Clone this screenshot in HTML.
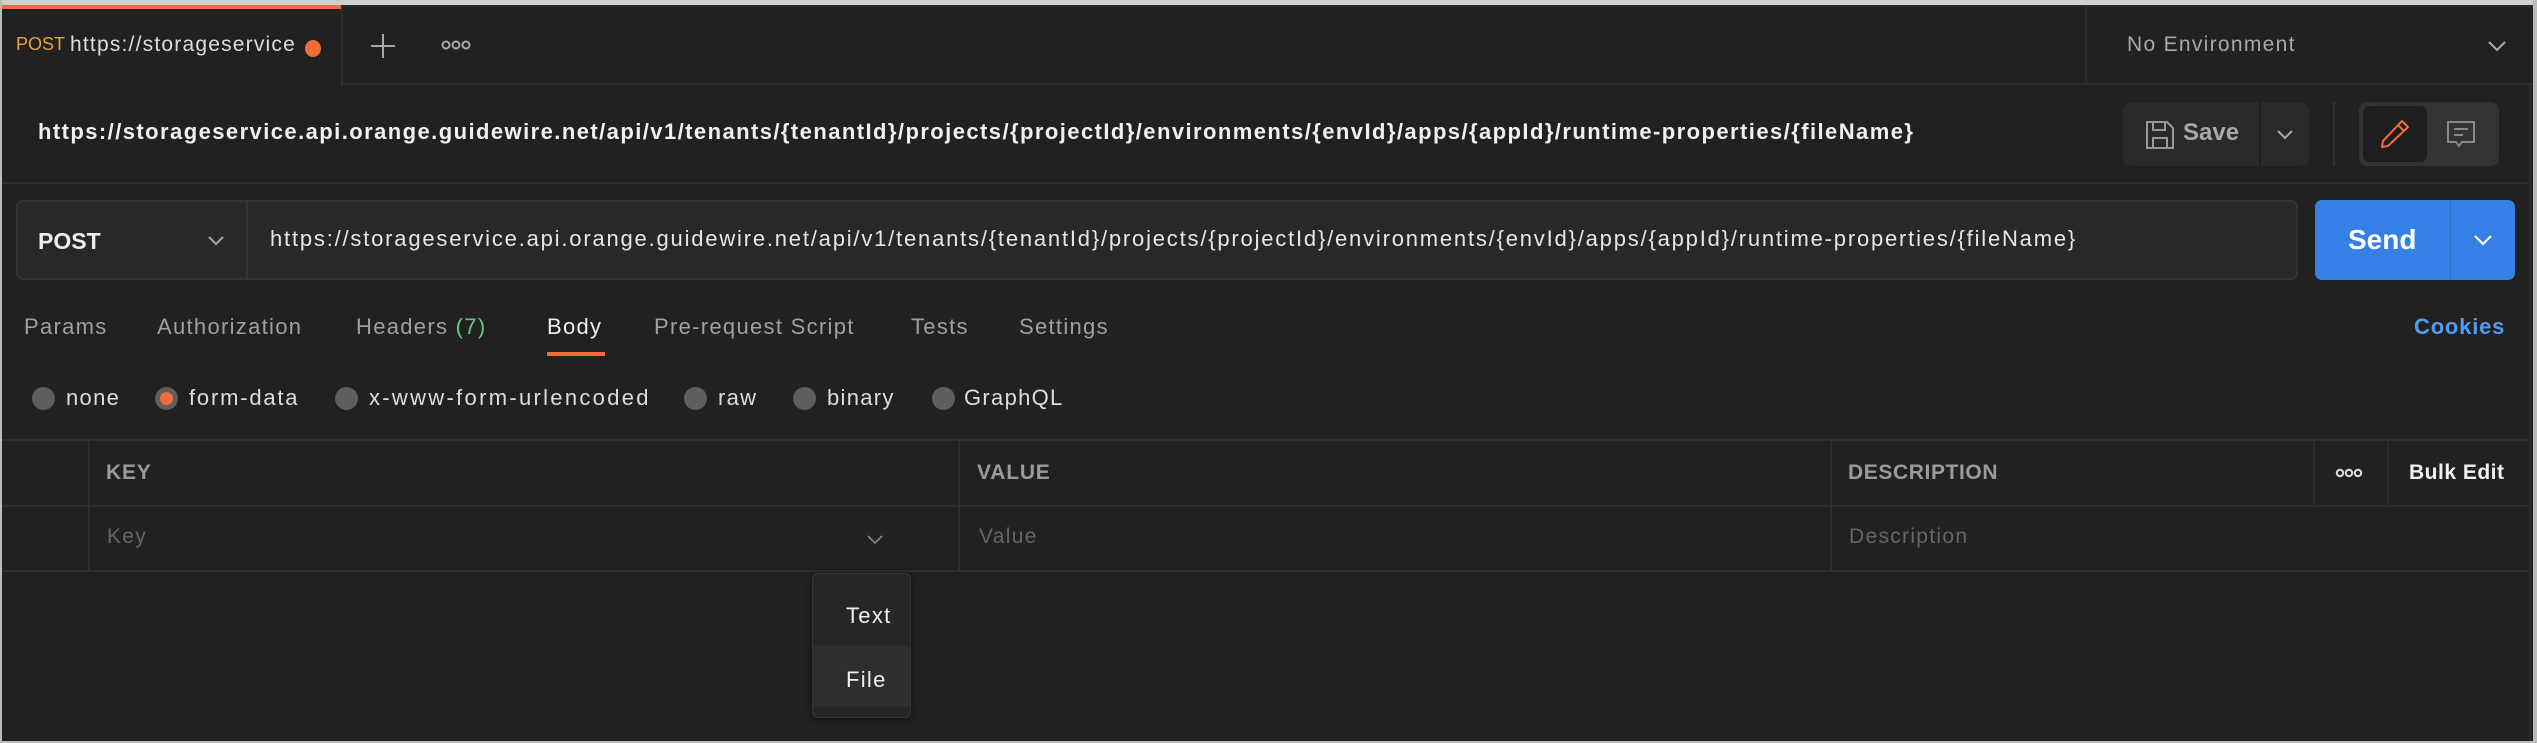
<!DOCTYPE html>
<html><head><meta charset="utf-8"><style>
*{margin:0;padding:0;box-sizing:border-box}
body{width:2537px;height:743px;background:#212121;font-family:"Liberation Sans",sans-serif;color:#cfcfcf;position:relative;overflow:hidden}
.a{position:absolute;white-space:nowrap}
.t{letter-spacing:1.3px}
.hl{position:absolute;height:2px;background:#2e2e2e}
.vl{position:absolute;width:2px;background:#2e2e2e}
svg{position:absolute}
</style></head><body>
<div class="a" style="left:0;top:0;width:2537px;height:5px;background:#cfcfcf"></div>
<div class="a" style="left:0;top:0;width:2px;height:743px;background:#bbb"></div>
<div class="a" style="left:0;top:741px;width:2537px;height:2px;background:#bbb"></div>
<div class="a" style="left:2533px;top:0;width:4px;height:743px;background:#bbb"></div>
<!-- tab row -->
<div class="a" style="left:2px;top:5px;width:339px;height:4px;background:#f26b3a"></div>
<div class="vl" style="left:341px;top:5px;height:80px"></div>
<div class="hl" style="left:343px;top:83px;width:2190px"></div>
<div class="hl" style="left:343px;top:5px;width:2190px;background:#2a2a2a"></div>
<div class="a" style="left:16px;top:34px;font-size:18px;color:#e8a33d">POST</div>
<div class="a" style="left:70px;top:33px;font-size:21px;color:#ddd;width:225px;overflow:hidden;letter-spacing:1.2px">https://storageservice</div>
<div class="a" style="left:305px;top:40px;width:16px;height:17px;border-radius:50%;background:#f26b3a"></div>
<svg style="left:370px;top:33px" width="26" height="26"><path d="M13 1V25M1 13H25" stroke="#aaa" stroke-width="2"/></svg>
<svg style="left:441px;top:40px" width="30" height="10"><g fill="none" stroke="#aaa" stroke-width="2"><circle cx="5" cy="5" r="3.5"/><circle cx="15" cy="5" r="3.5"/><circle cx="25" cy="5" r="3.5"/></g></svg>
<div class="vl" style="left:2085px;top:5px;height:80px"></div>
<div class="a t" style="left:2127px;top:33px;font-size:21px;color:#a8a8a8">No Environment</div>
<svg style="left:2487px;top:40px" width="20" height="12"><path d="M2 2L10 10L18 2" stroke="#aaa" stroke-width="2" fill="none"/></svg>
<!-- title row -->
<div class="a" style="left:38px;top:119px;font-size:22px;font-weight:bold;color:#f0f0f0;letter-spacing:1.43px">https://storageservice.api.orange.guidewire.net/api/v1/tenants/{tenantId}/projects/{projectId}/environments/{envId}/apps/{appId}/runtime-properties/{fileName}</div>
<div class="a" style="left:2123px;top:102px;width:136px;height:64px;background:#2a2a2a;border-radius:8px 0 0 8px"></div>
<div class="a" style="left:2261px;top:102px;width:48px;height:64px;background:#2a2a2a;border-radius:0 8px 8px 0"></div>
<svg style="left:2145px;top:120px" width="30" height="30"><path d="M2 2H22L28 8V28H2Z M8 2V10H20V2 M8 28V18H22V28" stroke="#999" stroke-width="2" fill="none"/></svg>
<div class="a" style="left:2183px;top:119px;font-size:24px;font-weight:bold;color:#a8a8a8">Save</div>
<svg style="left:2276px;top:129px" width="18" height="11"><path d="M2 2L9 9L16 2" stroke="#aaa" stroke-width="2" fill="none"/></svg>
<div class="vl" style="left:2333px;top:102px;height:64px;background:#333"></div>
<div class="a" style="left:2359px;top:102px;width:140px;height:64px;background:#333;border-radius:8px"></div>
<div class="a" style="left:2363px;top:106px;width:64px;height:56px;background:#1e1e1e;border-radius:7px"></div>
<svg style="left:2380px;top:119px" width="30" height="30"><path d="M22 2L28 8L8 27L2 28L3 22Z M18 6L24 12" stroke="#f26b3a" stroke-width="2" fill="none" stroke-linejoin="round"/></svg>
<svg style="left:2446px;top:120px" width="30" height="29"><path d="M2 2H28V22H16L13 26L10 22H2Z M8 9H22 M8 15H17" stroke="#888" stroke-width="2" fill="none"/></svg>
<div class="hl" style="left:2px;top:182px;width:2527px"></div>
<div class="vl" style="left:2529px;top:84px;height:657px;background:#2a2a2a"></div>
<!-- request row -->
<div class="a" style="left:16px;top:200px;width:2282px;height:80px;background:#282828;border:2px solid #333;border-radius:7px"></div>
<div class="vl" style="left:246px;top:201px;height:78px;background:#333"></div>
<div class="a" style="left:38px;top:228px;font-size:23px;font-weight:bold;color:#eee">POST</div>
<svg style="left:207px;top:235px" width="18" height="11"><path d="M2 2L9 9L16 2" stroke="#aaa" stroke-width="2" fill="none"/></svg>
<div class="a" style="left:270px;top:226px;font-size:22px;color:#e6e6e6;letter-spacing:1.8px">https://storageservice.api.orange.guidewire.net/api/v1/tenants/{tenantId}/projects/{projectId}/environments/{envId}/apps/{appId}/runtime-properties/{fileName}</div>
<div class="a" style="left:2315px;top:200px;width:200px;height:80px;background:#3580e6;border-radius:7px"></div>
<div class="a" style="left:2450px;top:200px;width:1px;height:80px;background:#2c6dc8"></div>
<div class="a" style="left:2348px;top:224px;font-size:28px;font-weight:bold;color:#fff">Send</div>
<svg style="left:2473px;top:234px" width="20" height="12"><path d="M2 2L10 10L18 2" stroke="#fff" stroke-width="2.2" fill="none"/></svg>
<!-- tabs -->
<div class="a t" style="left:24px;top:314px;font-size:22px;color:#a0a0a0">Params</div>
<div class="a t" style="left:157px;top:314px;font-size:22px;color:#a0a0a0">Authorization</div>
<div class="a t" style="left:356px;top:314px;font-size:22px;color:#a0a0a0">Headers <span style="color:#6cc48a">(7)</span></div>
<div class="a t" style="left:547px;top:314px;font-size:22px;color:#f0f0f0">Body</div>
<div class="a" style="left:547px;top:352px;width:58px;height:4px;background:#f26b3a"></div>
<div class="a t" style="left:654px;top:314px;font-size:22px;color:#a0a0a0">Pre-request Script</div>
<div class="a t" style="left:911px;top:314px;font-size:22px;color:#a0a0a0">Tests</div>
<div class="a t" style="left:1019px;top:314px;font-size:22px;color:#a0a0a0">Settings</div>
<div class="a" style="left:2414px;top:314px;font-size:22px;font-weight:bold;color:#4f9ef0;letter-spacing:0.8px">Cookies</div>
<!-- radios -->
<div class="a" style="left:32px;top:387px;width:23px;height:23px;border-radius:50%;background:#5e5e5e"></div>
<div class="a t" style="left:66px;top:385px;font-size:22px;color:#ddd">none</div>
<div class="a" style="left:155px;top:387px;width:23px;height:23px;border-radius:50%;background:#5e5e5e"></div>
<div class="a" style="left:160px;top:392px;width:13px;height:13px;border-radius:50%;background:#f26b3a"></div>
<div class="a t" style="left:189px;top:385px;font-size:22px;color:#ddd;letter-spacing:1.8px">form-data</div>
<div class="a" style="left:335px;top:387px;width:23px;height:23px;border-radius:50%;background:#5e5e5e"></div>
<div class="a" style="left:369px;top:385px;font-size:22px;color:#ddd;letter-spacing:2.3px">x-www-form-urlencoded</div>
<div class="a" style="left:684px;top:387px;width:23px;height:23px;border-radius:50%;background:#5e5e5e"></div>
<div class="a t" style="left:718px;top:385px;font-size:22px;color:#ddd">raw</div>
<div class="a" style="left:793px;top:387px;width:23px;height:23px;border-radius:50%;background:#5e5e5e"></div>
<div class="a t" style="left:827px;top:385px;font-size:22px;color:#ddd">binary</div>
<div class="a" style="left:932px;top:387px;width:23px;height:23px;border-radius:50%;background:#5e5e5e"></div>
<div class="a t" style="left:964px;top:385px;font-size:22px;color:#ddd">GraphQL</div>
<!-- table -->
<div class="hl" style="left:2px;top:439px;width:2527px"></div>
<div class="hl" style="left:2px;top:505px;width:2527px"></div>
<div class="hl" style="left:2px;top:570px;width:2527px"></div>
<div class="vl" style="left:88px;top:440px;height:131px"></div>
<div class="vl" style="left:958px;top:440px;height:131px"></div>
<div class="vl" style="left:1830px;top:440px;height:131px"></div>
<div class="vl" style="left:2313px;top:440px;height:66px"></div>
<div class="vl" style="left:2387px;top:440px;height:66px"></div>
<div class="a" style="left:106px;top:461px;font-size:21px;font-weight:bold;color:#9a9a9a;letter-spacing:0.8px">KEY</div>
<div class="a" style="left:977px;top:461px;font-size:21px;font-weight:bold;color:#9a9a9a;letter-spacing:0.8px">VALUE</div>
<div class="a" style="left:1848px;top:461px;font-size:21px;font-weight:bold;color:#9a9a9a;letter-spacing:0.6px">DESCRIPTION</div>
<svg style="left:2335px;top:468px" width="28" height="10"><g fill="none" stroke="#ddd" stroke-width="2"><circle cx="5" cy="5" r="3.2"/><circle cx="14" cy="5" r="3.2"/><circle cx="23" cy="5" r="3.2"/></g></svg>
<div class="a" style="left:2409px;top:461px;font-size:21px;font-weight:bold;color:#f0f0f0;letter-spacing:0.5px">Bulk Edit</div>
<div class="a t" style="left:107px;top:525px;font-size:21px;color:#666">Key</div>
<svg style="left:867px;top:535px" width="16" height="10"><path d="M1 1L8 8L15 1" stroke="#888" stroke-width="1.6" fill="none"/></svg>
<div class="a t" style="left:979px;top:525px;font-size:21px;color:#666">Value</div>
<div class="a t" style="left:1849px;top:525px;font-size:21px;color:#666">Description</div>
<!-- dropdown -->
<div class="a" style="left:812px;top:573px;width:99px;height:145px;background:#262626;border:1px solid #333;border-radius:6px;box-shadow:0 2px 8px rgba(0,0,0,.5)"></div>
<div class="a" style="left:813px;top:646px;width:97px;height:61px;background:#2e2e2e"></div>
<div class="a t" style="left:846px;top:603px;font-size:22px;color:#eee">Text</div>
<div class="a t" style="left:846px;top:667px;font-size:22px;color:#eee">File</div>
</body></html>
